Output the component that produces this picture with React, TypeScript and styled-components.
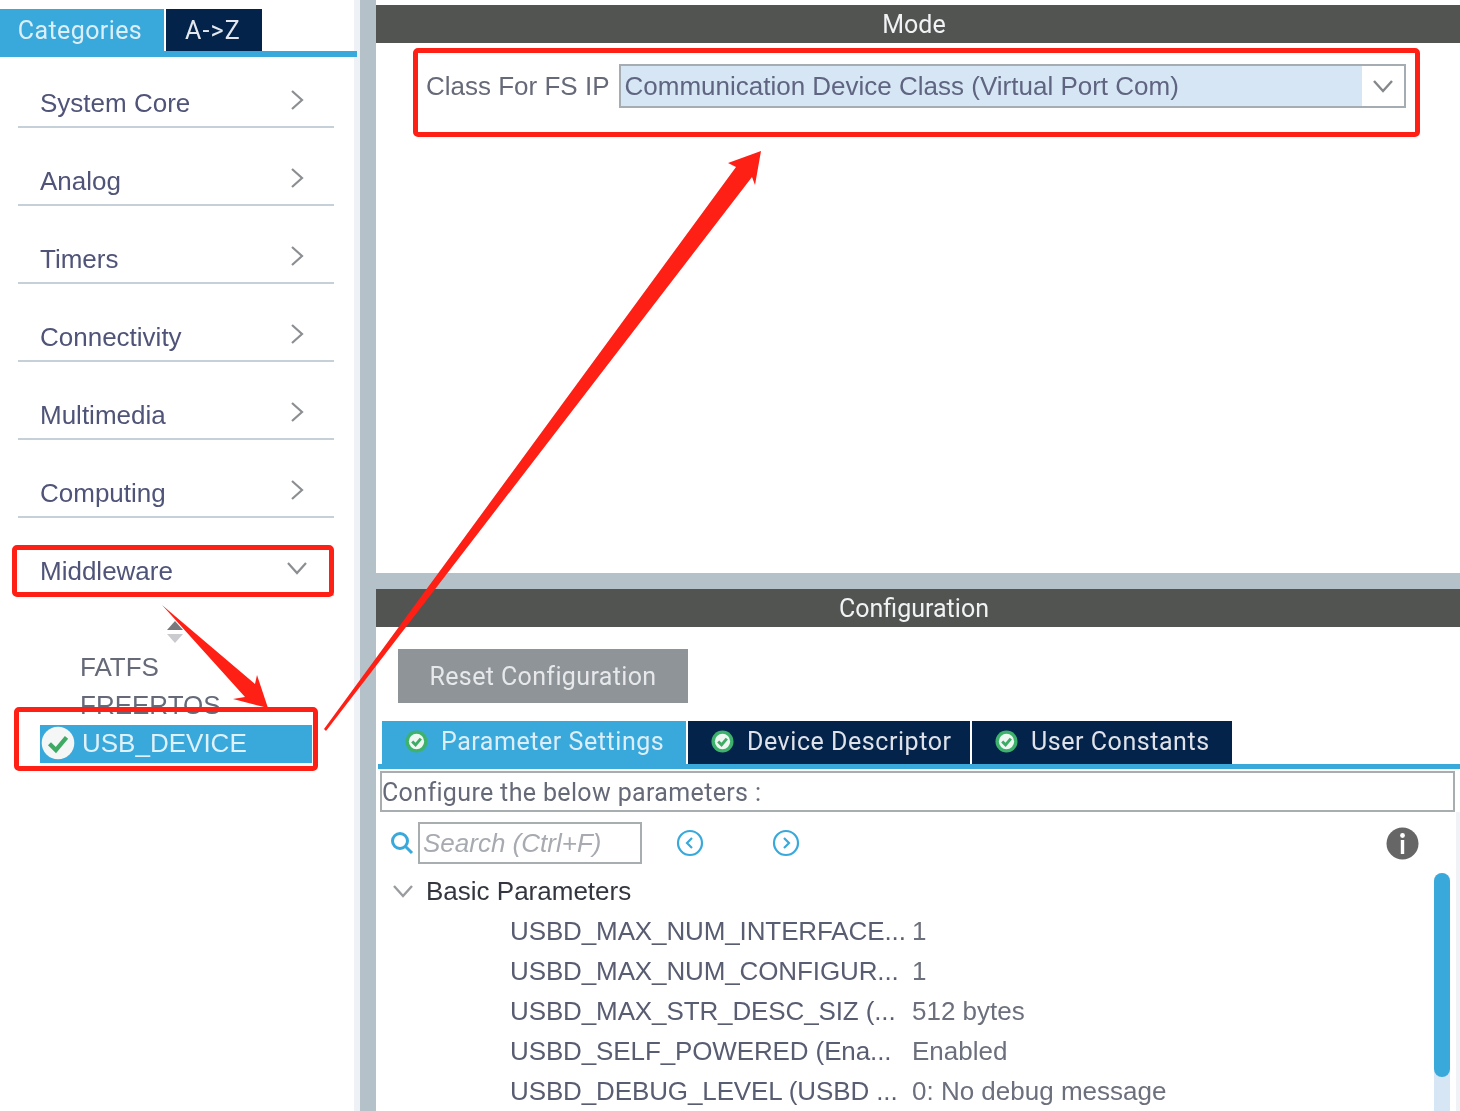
import React from "react";
import styled, { createGlobalStyle } from "styled-components";

const Global = createGlobalStyle`
  html, body { margin: 0; padding: 0; background: #fff; }
  * { box-sizing: border-box; }
`;

const BLUE = "#39a9dc";
const NAVY = "#03234b";
const SANS = `"Liberation Sans", Arial, sans-serif`;
const ROBOTO = `Roboto, "Liberation Sans", sans-serif`;

const Page = styled.div`
  position: relative;
  width: 1460px;
  height: 1111px;
  overflow: hidden;
  display: flex;
  background: #fff;
  filter: blur(0.5px);
`;

const Sidebar = styled.aside`
  width: 354px;
  flex: none;
  display: flex;
  flex-direction: column;
  padding-top: 9px;
`;
const Strip = styled.div`
  width: 6px;
  flex: none;
  background: #eef1f5;
`;
const VSplit = styled.div`
  width: 16px;
  flex: none;
  background: #b5c1c8;
`;

const TabBar = styled.div`
  position: relative;
  z-index: 1;
  display: flex;
  gap: 2px;
  height: 48px;
  width: 357px;
  border-bottom: 6px solid ${BLUE};
`;
const TopTab = styled.div<{ $active?: boolean; $w: number }>`
  width: ${(p) => p.$w}px;
  height: 42px;
  background: ${(p) => (p.$active ? BLUE : NAVY)};
  color: ${(p) => (p.$active ? "#dceef8" : "#e4e8ee")};
  font: 25px ${ROBOTO};
  letter-spacing: ${(p) => (p.$active ? "0.4px" : "1.2px")};
  display: flex;
  align-items: center;
  justify-content: center;
  padding-right: ${(p) => (p.$active ? "4px" : "2px")};
`;

const CatList = styled.div`
  display: flex;
  flex-direction: column;
  gap: 30px;
  padding: 23px 20px 0 18px;
`;
const CatRow = styled.div`
  height: 48px;
  border-bottom: 2px solid #c5d0d8;
  display: flex;
  align-items: center;
  justify-content: space-between;
  padding: 0 30px 0 22px;
  color: #4f5478;
  font: 26px ${SANS};
`;
const CatChevron = styled.svg`
  width: 14px;
  height: 22px;
  margin-top: -6px;
  fill: none;
  stroke: #8c8f92;
  stroke-width: 2.2;
`;
const CatDown = styled.svg`
  width: 22px;
  height: 14px;
  margin: -6px -4px 0 0;
  fill: none;
  stroke: #8c8f92;
  stroke-width: 2.2;
`;

const SortArrows = styled.svg`
  display: block;
  width: 20px;
  height: 26px;
  margin: 23px 0 0 165px;
`;
const Tree = styled.div`
  display: flex;
  flex-direction: column;
  padding-left: 40px;
  margin-top: 3px;
`;
const TreeItem = styled.div`
  height: 38px;
  padding-left: 40px;
  display: flex;
  align-items: center;
  color: #666a78;
  font: 26px ${SANS};
`;
const TreeSelected = styled.div`
  width: 272px;
  height: 38px;
  margin-top: 1px;
  background: ${BLUE};
  color: #dff1fa;
  font: 26px ${SANS};
  display: flex;
  align-items: center;
  gap: 7px;
  padding: 0 0 2px 1px;
`;

const Main = styled.main`
  flex: 1;
  min-width: 0;
  display: flex;
  flex-direction: column;
  padding-top: 5px;
`;
const SectionHead = styled.div`
  height: 38px;
  flex: none;
  background: #525452;
  color: #f0f2f4;
  font: 25px ${ROBOTO};
  display: flex;
  align-items: center;
  justify-content: center;
  padding-right: 8px;
`;
const ModePanel = styled.section`
  height: 530px;
  flex: none;
  padding: 21px 54px 0 50px;
`;
const ModeRow = styled.div`
  display: flex;
  align-items: center;
  gap: 10px;
  color: #666a78;
  font: 26px ${SANS};
`;
const SelectBox = styled.div`
  flex: 1;
  height: 44px;
  border: 2px solid #a6adb2;
  display: flex;
  align-items: center;
  background: #fff;
`;
const SelectValue = styled.div`
  flex: 1;
  height: 100%;
  background: #d6e6f4;
  padding-left: 3px;
  display: flex;
  align-items: center;
  color: #5f6480;
`;
const SelectBtn = styled.div`
  width: 42px;
  display: flex;
  justify-content: center;
`;
const DownIcon = styled.svg`
  width: 22px;
  height: 14px;
  fill: none;
  stroke: #85888b;
  stroke-width: 2.4;
`;
const HSplit = styled.div`
  height: 16px;
  flex: none;
  background: #b5c1c8;
`;

const ResetBtn = styled.button`
  display: block;
  width: 290px;
  height: 54px;
  margin: 22px 0 0 22px;
  border: 0;
  padding: 0;
  background: #8f9499;
  color: #e6e8ea;
  font: 25px ${ROBOTO};
  letter-spacing: 0.37px;
`;
const ConfigTabs = styled.div`
  display: flex;
  gap: 2px;
  margin: 18px 0 0 2px;
  padding-left: 4px;
  height: 48px;
  border-bottom: 5px solid ${BLUE};
`;
const ConfigTab = styled.div<{ $active?: boolean; $w: number }>`
  width: ${(p) => p.$w}px;
  height: 43px;
  background: ${(p) => (p.$active ? BLUE : NAVY)};
  color: ${(p) => (p.$active ? "#dceef8" : "#dfe3e9")};
  font: 25px ${ROBOTO};
  letter-spacing: 0.55px;
  display: flex;
  align-items: center;
  gap: 13px;
  padding: 0 0 3px 23px;
  white-space: nowrap;
`;
const HintBox = styled.div`
  height: 41px;
  margin: 2px 5px 0 4px;
  border: 2px solid #a8adb0;
  display: flex;
  align-items: center;
  padding: 2px 0 0 0;
  color: #666a78;
  font: 25px ${ROBOTO};
  letter-spacing: 0.35px;
`;
const Toolbar = styled.div`
  display: flex;
  align-items: center;
  height: 42px;
  margin-top: 10px;
  padding-left: 14px;
`;
const SearchField = styled.div`
  width: 224px;
  height: 42px;
  margin-left: 4px;
  border: 2px solid #a8adb0;
  display: flex;
  align-items: center;
  padding-left: 3px;
  color: #a7aab0;
  font: italic 26px ${SANS};
  white-space: nowrap;
  overflow: hidden;
`;
const NavIcon = styled.svg<{ $ml: number }>`
  width: 28px;
  height: 28px;
  margin-left: ${(p) => p.$ml}px;
  fill: none;
  stroke: ${BLUE};
  stroke-width: 2.2;
`;
const InfoIcon = styled.svg`
  width: 33px;
  height: 33px;
  margin-left: auto;
  margin-right: 41px;
`;
const TreeArea = styled.div`
  position: relative;
  flex: 1;
  padding-top: 7px;
`;
const GroupRow = styled.div`
  display: flex;
  align-items: center;
  height: 40px;
  padding-left: 16px;
  gap: 12px;
  color: #33363f;
  font: 26px ${SANS};
`;
const ParamRow = styled.div`
  display: flex;
  align-items: center;
  height: 40px;
  padding-left: 134px;
  color: #595d72;
  font: 26px ${SANS};
  white-space: nowrap;
`;
const ParamName = styled.span`
  width: 402px;
  flex: none;
  letter-spacing: -0.12px;
`;
const ParamValue = styled.span`
  color: #6c6f7c;
`;
const ScrollTrack = styled.div`
  position: absolute;
  top: 9px;
  right: 10px;
  bottom: 0;
  width: 16px;
  border-radius: 8px 8px 0 0;
  background: #d6e6f4;
`;
const ScrollThumb = styled.div`
  height: 204px;
  border-radius: 8px;
  background: ${BLUE};
`;
const RightEdge = styled.div`
  position: absolute;
  top: 812px;
  right: 0;
  bottom: 0;
  width: 4px;
  background: #f0f2f5;
`;

const Callout = styled.div<{ $x: number; $y: number; $w: number; $h: number }>`
  position: absolute;
  left: ${(p) => p.$x}px;
  top: ${(p) => p.$y}px;
  width: ${(p) => p.$w}px;
  height: ${(p) => p.$h}px;
  border: 5px solid #ff2015;
  border-radius: 5px;
  pointer-events: none;
`;
const ArrowLayer = styled.svg`
  position: absolute;
  inset: 0;
  width: 1460px;
  height: 1111px;
  pointer-events: none;
`;

const Check: React.FC<{ size: number; sw?: number }> = ({ size, sw = 3 }) => (
  <svg width={size} height={size} viewBox="0 0 24 24" style={{ flex: "none" }}>
    <circle cx="12" cy="12" r="11.5" fill="#f4f7f5" />
    <polyline points="6,12.5 10.5,17 18,8" fill="none" stroke="#3eaa64" strokeWidth={sw} />
  </svg>
);
const TabCheck: React.FC = () => (
  <svg width="23" height="23" viewBox="0 0 24 24" style={{ flex: "none" }}>
    <circle cx="12" cy="12" r="11.5" fill="#3eb26c" />
    <circle cx="12" cy="12" r="8" fill="#eef7f1" />
    <polyline points="7.5,12 11,15.5 16.5,9" fill="none" stroke="#3eaa64" strokeWidth="3" />
  </svg>
);

const cats = ["System Core", "Analog", "Timers", "Connectivity", "Multimedia", "Computing"];
const params: [string, string][] = [
  ["USBD_MAX_NUM_INTERFACE...", "1"],
  ["USBD_MAX_NUM_CONFIGUR...", "1"],
  ["USBD_MAX_STR_DESC_SIZ (...", "512 bytes"],
  ["USBD_SELF_POWERED (Ena...", "Enabled"],
  ["USBD_DEBUG_LEVEL (USBD ...", "0: No debug message"],
];

export default function App() {
  return (
    <Page>
      <Global />
      <Sidebar>
        <TabBar>
          <TopTab $active $w={164}>Categories</TopTab>
          <TopTab $w={96}>A-&gt;Z</TopTab>
        </TabBar>
        <CatList>
          {cats.map((c) => (
            <CatRow key={c}>
              {c}
              <CatChevron viewBox="0 0 14 22">
                <polyline points="2,2 12,11 2,20" />
              </CatChevron>
            </CatRow>
          ))}
          <CatRow>
            Middleware
            <CatDown viewBox="0 0 22 14">
              <polyline points="2,2 11,12 20,2" />
            </CatDown>
          </CatRow>
        </CatList>
        <SortArrows viewBox="0 0 20 26">
          <polygon points="10,2 18,11 2,11" fill="#77797c" />
          <polygon points="2,15 18,15 10,24" fill="#c9cbce" />
        </SortArrows>
        <Tree>
          <TreeItem>FATFS</TreeItem>
          <TreeItem>FREERTOS</TreeItem>
          <TreeSelected>
            <Check size={34} />
            USB_DEVICE
          </TreeSelected>
        </Tree>
      </Sidebar>
      <Strip />
      <VSplit />
      <Main>
        <SectionHead>Mode</SectionHead>
        <ModePanel>
          <ModeRow>
            Class For FS IP
            <SelectBox>
              <SelectValue>Communication Device Class (Virtual Port Com)</SelectValue>
              <SelectBtn>
                <DownIcon viewBox="0 0 22 14">
                  <polyline points="2,2 11,12 20,2" />
                </DownIcon>
              </SelectBtn>
            </SelectBox>
          </ModeRow>
        </ModePanel>
        <HSplit />
        <SectionHead>Configuration</SectionHead>
        <ResetBtn>Reset Configuration</ResetBtn>
        <ConfigTabs>
          <ConfigTab $active $w={304}><TabCheck />Parameter Settings</ConfigTab>
          <ConfigTab $w={282}><TabCheck />Device Descriptor</ConfigTab>
          <ConfigTab $w={260}><TabCheck />User Constants</ConfigTab>
        </ConfigTabs>
        <HintBox>Configure the below parameters :</HintBox>
        <Toolbar>
          <svg width="24" height="24" viewBox="0 0 24 24" fill="none" stroke={BLUE} strokeWidth="3" style={{ flex: "none" }}>
            <circle cx="10" cy="10" r="7.5" />
            <line x1="15.5" y1="15.5" x2="22" y2="22" />
          </svg>
          <SearchField>Search (Ctrl+F)</SearchField>
          <NavIcon $ml={34} viewBox="0 0 28 28">
            <circle cx="14" cy="14" r="12" />
            <polyline points="16,9 11,14 16,19" />
          </NavIcon>
          <NavIcon $ml={68} viewBox="0 0 28 28">
            <circle cx="14" cy="14" r="12" />
            <polyline points="12,9 17,14 12,19" />
          </NavIcon>
          <InfoIcon viewBox="0 0 33 33">
            <circle cx="16.5" cy="16.5" r="16" fill="#666" />
            <circle cx="16.5" cy="8.5" r="2.4" fill="#fff" />
            <rect x="14.8" y="13" width="3.4" height="14" fill="#fff" />
          </InfoIcon>
        </Toolbar>
        <TreeArea>
          <GroupRow>
            <DownIcon viewBox="0 0 22 14" style={{ stroke: "#9a9da0" }}>
              <polyline points="2,2 11,12 20,2" />
            </DownIcon>
            Basic Parameters
          </GroupRow>
          {params.map(([n, v]) => (
            <ParamRow key={n}>
              <ParamName>{n}</ParamName>
              <ParamValue>{v}</ParamValue>
            </ParamRow>
          ))}
          <ScrollTrack>
            <ScrollThumb />
          </ScrollTrack>
        </TreeArea>
      </Main>
      <RightEdge />
      <ArrowLayer viewBox="0 0 1460 1111">
        <polygon points="324,729 736,167 728,163 761,151 755,185 752,177 326,731" fill="#ff2015" />
        <polygon points="162,605 255,684 257,675 268,708 233,699 245,697" fill="#ff2015" />
      </ArrowLayer>
      <Callout $x={413} $y={48} $w={1007} $h={89} />
      <Callout $x={12} $y={545} $w={322} $h={52} />
      <Callout $x={14} $y={707} $w={304} $h={64} />
    </Page>
  );
}
